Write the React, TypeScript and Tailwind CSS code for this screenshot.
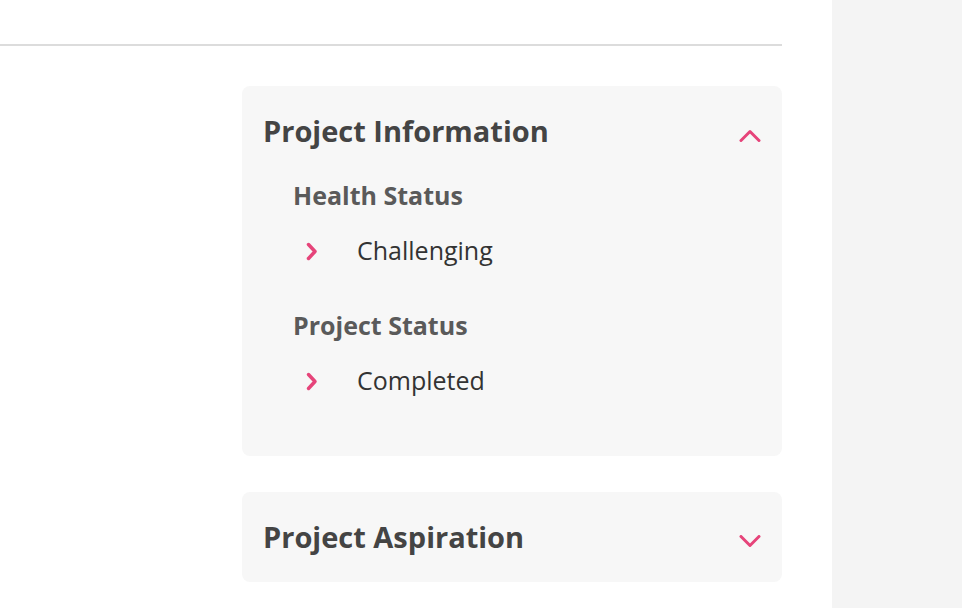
const font = { fontFamily: "'Open Sans', Lato, sans-serif" };

function Arrow({ dir }: { dir: "up" | "down" }) {
  return (
    <svg width="22" height="13" viewBox="0 0 22 13" className="mt-[9px] text-[#e6447a]">
      <path
        d={dir === "up" ? "M2 11.5 L11 2.5 L20 11.5" : "M2 1.5 L11 10.5 L20 1.5"}
        fill="none"
        stroke="currentColor"
        strokeWidth="3"
        strokeLinecap="round"
        strokeLinejoin="round"
      />
    </svg>
  );
}

function Item({ label }: { label: string }) {
  return (
    <div className="flex items-center h-[30px] mt-[25px]">
      <svg width="12" height="19" viewBox="0 0 12 19" className="ml-[13px] text-[#e6447a]">
        <path d="M2.5 2.5 L9 9.5 L2.5 16.5" fill="none" stroke="currentColor" strokeWidth="3.5" strokeLinecap="round" strokeLinejoin="round" />
      </svg>
      <span className="ml-[39px] text-[25px] text-[#333]">{label}</span>
    </div>
  );
}

export default function App() {
  return (
    <div className="flex w-[962px] h-[608px] overflow-hidden bg-white" style={font}>
      <div className="w-[832px] shrink-0">
        <div className="w-[782px] h-[46px] border-b-2 border-[#dcdcdc]"></div>
        <div className="ml-[242px] w-[540px] pt-[40px]">
          <div className="bg-[#f7f7f7] rounded-lg px-[21px] pt-5 pb-5">
            <div className="flex items-center justify-between h-[50px]">
              <h2 className="text-[29px] font-bold text-[#444]">Project Information</h2>
              <Arrow dir="up" />
            </div>
            <div className="pl-[30px] pt-[25px] pb-[40px]">
              <h3 className="h-[30px] text-[25px] font-bold text-[#5a5a5a] flex items-center">Health Status</h3>
              <Item label="Challenging" />
              <h3 className="h-[30px] mt-[45px] text-[25px] font-bold text-[#5a5a5a] flex items-center">Project Status</h3>
              <Item label="Completed" />
            </div>
          </div>
          <div className="bg-[#f7f7f7] rounded-lg px-[21px] py-5 mt-9">
            <div className="flex items-center justify-between h-[50px]">
              <h2 className="text-[29px] font-bold text-[#444]">Project Aspiration</h2>
              <Arrow dir="down" />
            </div>
          </div>
        </div>
      </div>
      <div className="flex-1 bg-[#f4f4f4]"></div>
    </div>
  );
}
